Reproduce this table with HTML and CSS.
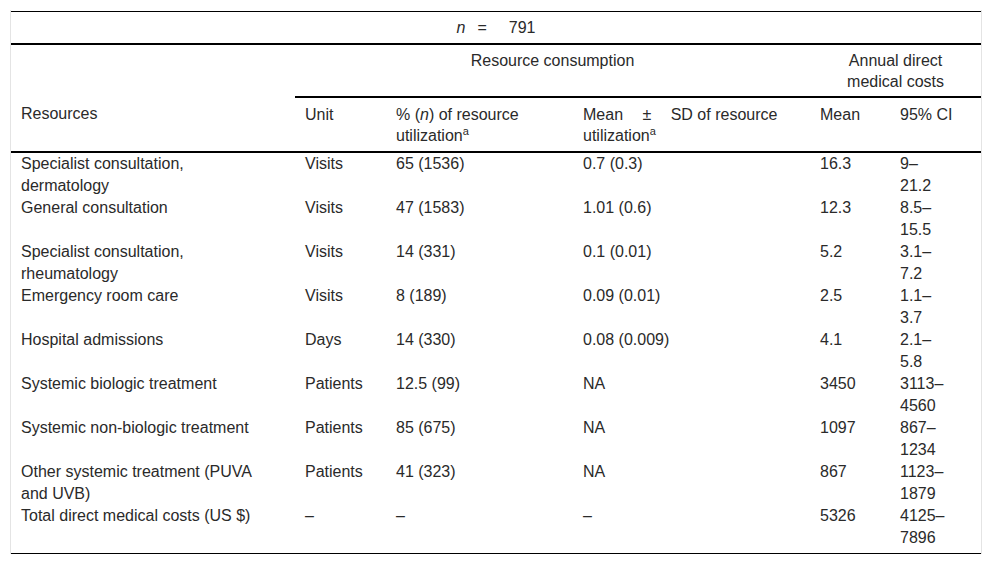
FILE: index.html
```html
<!DOCTYPE html>
<html lang="en">
<head>
<meta charset="utf-8">
<title>Resource consumption table</title>
<link rel="stylesheet" href="styles.css">
</head>
<body>
<div class="wrap">
<table class="tbl">
  <colgroup>
    <col class="c1"><col class="c2"><col class="c3"><col class="c4"><col class="c5"><col class="c6">
  </colgroup>
  <thead>
    <tr class="nrow">
      <th colspan="6"><i class="n">n</i><span class="eq">=</span>791</th>
    </tr>
    <tr class="grp">
      <th class="blank"></th>
      <th colspan="3" class="center under">Resource consumption</th>
      <th colspan="2" class="center under">Annual direct<br>medical costs</th>
    </tr>
    <tr class="sub">
      <th>Resources</th>
      <th>Unit</th>
      <th>% (<i>n</i>) of resource utilization<sup>a</sup></th>
      <th><span class="spread">Mean ± SD</span> of resource<br>utilization<sup>a</sup></th>
      <th>Mean</th>
      <th>95% CI</th>
    </tr>
  </thead>
  <tbody>
    <tr><td>Specialist consultation,<br>dermatology</td><td>Visits</td><td>65 (1536)</td><td>0.7 (0.3)</td><td>16.3</td><td>9–<br>21.2</td></tr>
    <tr><td>General consultation</td><td>Visits</td><td>47 (1583)</td><td>1.01 (0.6)</td><td>12.3</td><td>8.5–<br>15.5</td></tr>
    <tr><td>Specialist consultation,<br>rheumatology</td><td>Visits</td><td>14 (331)</td><td>0.1 (0.01)</td><td>5.2</td><td>3.1–<br>7.2</td></tr>
    <tr><td>Emergency room care</td><td>Visits</td><td>8 (189)</td><td>0.09 (0.01)</td><td>2.5</td><td>1.1–<br>3.7</td></tr>
    <tr><td>Hospital admissions</td><td>Days</td><td>14 (330)</td><td>0.08 (0.009)</td><td>4.1</td><td>2.1–<br>5.8</td></tr>
    <tr><td>Systemic biologic treatment</td><td>Patients</td><td>12.5 (99)</td><td>NA</td><td>3450</td><td>3113–<br>4560</td></tr>
    <tr><td>Systemic non-biologic treatment</td><td>Patients</td><td>85 (675)</td><td>NA</td><td>1097</td><td>867–<br>1234</td></tr>
    <tr><td>Other systemic treatment (PUVA<br>and UVB)</td><td>Patients</td><td>41 (323)</td><td>NA</td><td>867</td><td>1123–<br>1879</td></tr>
    <tr><td>Total direct medical costs (US $)</td><td>–</td><td>–</td><td>–</td><td>5326</td><td>4125–<br>7896</td></tr>
  </tbody>
</table>
</div>
</body>
</html>
```

FILE: styles.css
```css
html, body {
  margin: 0;
  padding: 0;
  background: #ffffff;
}

body {
  font-family: "Liberation Sans", Arial, sans-serif;
  font-size: 16px;
  color: #2a2a2a;
}

.wrap {
  margin: 10px 10px 0;
  padding-top: 1px;
  border-left: 1px solid #e4e4e4;
  border-right: 1px solid #e4e4e4;
}

.tbl {
  width: 100%;
  table-layout: fixed;
  border-collapse: collapse;
  border-top: 1px solid #000;
  border-bottom: 1px solid #000;
}

.c1 { width: 284px; }
.c2 { width: 91px; }
.c3 { width: 187px; }
.c4 { width: 237px; }
.c5 { width: 80px; }
.c6 { width: 91px; }

.tbl th,
.tbl td {
  text-align: left;
  vertical-align: top;
  font-weight: normal;
  padding: 0 10px;
}

.tbl th {
  line-height: 21px;
  padding-top: 5px;
  padding-bottom: 5px;
}

.nrow th {
  text-align: center;
  border-bottom: 2px solid #000;
}

.n {
  margin-right: 12px;
}

.eq {
  margin-right: 22px;
}

.grp th {
  padding-bottom: 4px;
}

.grp .center {
  text-align: center;
}

.grp .under {
  border-bottom: 2px solid #000;
}

.sub th {
  padding-top: 6px;
  padding-bottom: 5px;
  border-bottom: 2px solid #000;
}

.spread {
  word-spacing: 15px;
}

sup {
  font-size: 11px;
  line-height: 0;
  vertical-align: 6px;
}

.tbl td {
  line-height: 22px;
}

.tbl tbody tr:last-child td {
  padding-bottom: 4px;
}
```
